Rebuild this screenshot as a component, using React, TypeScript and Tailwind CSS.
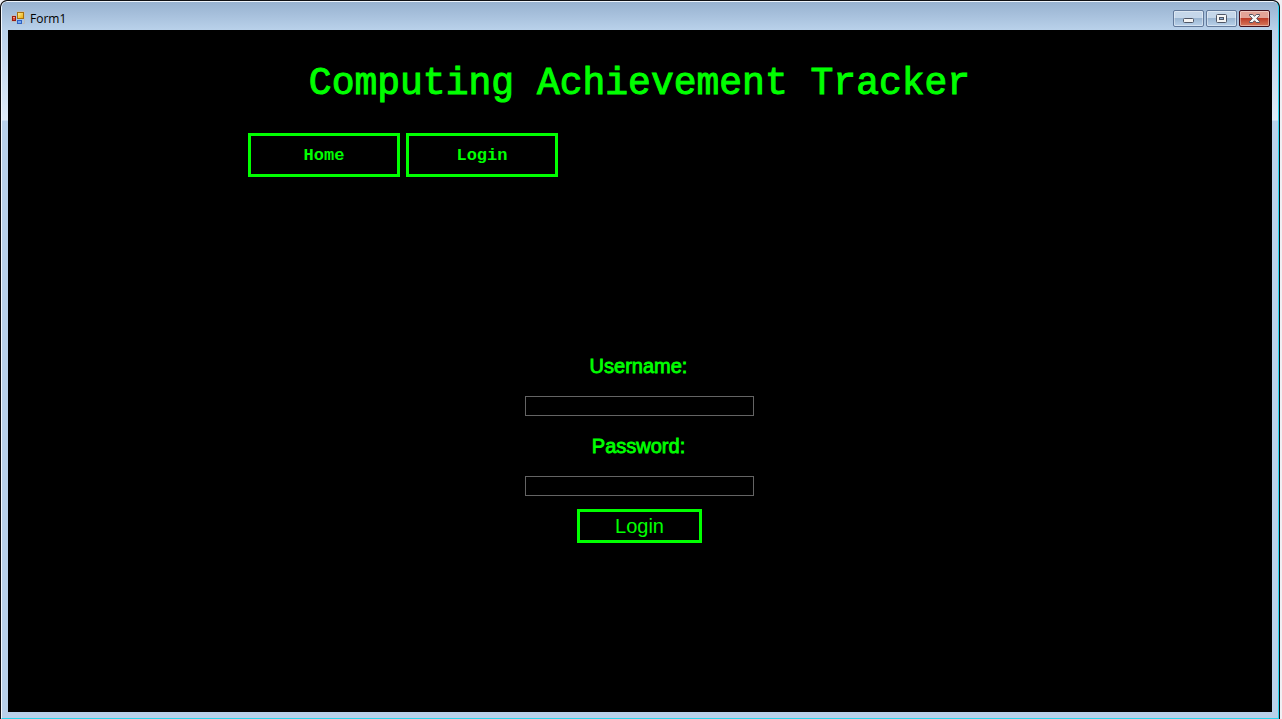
import type { ReactNode } from "react";

function FormIcon() {
  return (
    <svg width="15" height="15" viewBox="0 0 15 15" aria-hidden="true">
      <defs>
        <linearGradient id="gold" x1="0" y1="0" x2="1" y2="1">
          <stop offset="0" stopColor="#fff0a0" />
          <stop offset="1" stopColor="#e8a800" />
        </linearGradient>
      </defs>
      <path d="M5.5 .5H13.5V12.5H5.5M5.5 10.5H.5V4.5H5.5" fill="none" stroke="#bdbdbd" />
      <rect x="6.5" y="1.5" width="6" height="6" fill="url(#gold)" stroke="#a8700c" />
      <rect x="1.5" y="5.5" width="3" height="4" fill="#e0523a" stroke="#9b1c10" />
      <rect x="2" y="6" width="2" height="1" fill="#f4a08c" />
      <rect x="6.5" y="9.5" width="4" height="3" fill="#78aaf0" stroke="#2f62c4" />
    </svg>
  );
}

function CaptionButton({ label, close = false, children }: { label: string; close?: boolean; children: ReactNode }) {
  const tone = close
    ? "border-[#43101c] from-[#e3a397] from-45% via-[#bd3c28] via-50% to-[#d6765a]"
    : "border-[#62799a] from-[#c5d7ea] from-45% via-[#9bb6d2] via-50% to-[#b9d1ea]";
  return (
    <button
      type="button"
      aria-label={label}
      className={`flex h-[17px] w-[31px] items-center justify-center rounded-[2px] border bg-gradient-to-b shadow-[inset_0_0_0_1px_rgba(255,255,255,0.4)] ${tone}`}
    >
      {children}
    </button>
  );
}

function TitleBar() {
  return (
    <header className="flex h-7 shrink-0 items-center justify-between bg-gradient-to-b from-[#98b2d0] to-[#b9d1ea] pt-[5px] pr-2 pl-[9px]">
      <div className="flex items-center gap-1">
        <FormIcon />
        <span className="font-['Open_Sans','Noto_Sans',sans-serif] text-[12px] leading-4 text-black">Form1</span>
      </div>
      <div className="flex gap-[2px]">
        <CaptionButton label="Minimize">
          <svg width="11" height="11" viewBox="0 0 11 11">
            <rect x="0.5" y="5.5" width="10" height="4" rx="1" fill="#f4f4f4" stroke="#4f5666" />
          </svg>
        </CaptionButton>
        <CaptionButton label="Maximize">
          <svg width="11" height="9" viewBox="0 0 11 9">
            <rect x="0.5" y="0.5" width="10" height="8" rx="1" fill="#f4f4f4" stroke="#4f5666" />
            <rect x="3.5" y="3.5" width="4" height="2" fill="#8fb0d4" stroke="#4f5666" />
          </svg>
        </CaptionButton>
        <CaptionButton label="Close" close>
          <svg width="13" height="9" viewBox="0 0 13 9">
            <path
              d="M1.5 .5H4.7L6.5 2.3L8.3 .5H11.5V1.5L8.7 4.5L11.5 7.5V8.5H8.3L6.5 6.7L4.7 8.5H1.5V7.5L4.3 4.5L1.5 1.5Z"
              fill="#f6f6f6"
              stroke="#545261"
              strokeLinejoin="round"
            />
          </svg>
        </CaptionButton>
      </div>
    </header>
  );
}

function NavButton({ children }: { children: ReactNode }) {
  return (
    <button
      type="button"
      className="h-11 w-[152px] border-[3px] border-[#00ff00] pt-[2px] font-['Liberation_Mono',monospace] text-[17px] leading-5 font-bold"
    >
      {children}
    </button>
  );
}

function Field({ id, label, type }: { id: string; label: string; type: string }) {
  return (
    <div className="flex w-full flex-col items-center gap-[18px]">
      <label htmlFor={id} className="pr-[2px] text-[20px] leading-6 [-webkit-text-stroke:0.8px_#00ff00]">
        {label}
      </label>
      <input id={id} type={type} className="h-5 w-full border border-[#646464] bg-black px-1 text-sm outline-none" />
    </div>
  );
}

export default function App() {
  return (
    <div className="flex h-screen bg-[#f0f0f4] pr-[2px]">
      <div className="flex flex-1 overflow-hidden rounded-t-[7px] border-x border-t border-[#101014] bg-[#101014]">
        <div className="flex flex-1 flex-col overflow-hidden rounded-t-[6px] border border-t-[#eef4fb] border-r-[#27d5ee] border-b-[#27d5ee] border-l-[#f4f9ff] bg-[#b9d1ea]">
          <TitleBar />
          <div className="flex flex-1 bg-[linear-gradient(to_bottom,#b9d1ea_0,#dfebf8_90px,#b9d1ea_91px)] px-[6px] pb-[6px]">
            <main className="flex flex-1 flex-col items-center bg-black pr-px font-['Liberation_Sans',Arial,sans-serif] text-[#00ff00]">
              <h1 className="mt-[30px] font-['Liberation_Mono',monospace] text-[38px] leading-[48px] [-webkit-text-stroke:1px_#00ff00]">
                Computing Achievement Tracker
              </h1>
              <nav className="mt-[25px] flex w-full gap-[6px] px-[19%]">
                <NavButton>Home</NavButton>
                <NavButton>Login</NavButton>
              </nav>
              <form className="mt-[177px] flex w-[229px] flex-col items-center" onSubmit={(e) => e.preventDefault()}>
                <div className="flex w-full flex-col gap-[18px]">
                  <Field id="username" label="Username:" type="text" />
                  <Field id="password" label="Password:" type="password" />
                </div>
                <button
                  type="submit"
                  className="mt-[13px] h-[34px] w-[125px] border-[3px] border-[#00ff00] text-[20px] leading-6"
                >
                  Login
                </button>
              </form>
            </main>
          </div>
        </div>
      </div>
    </div>
  );
}
